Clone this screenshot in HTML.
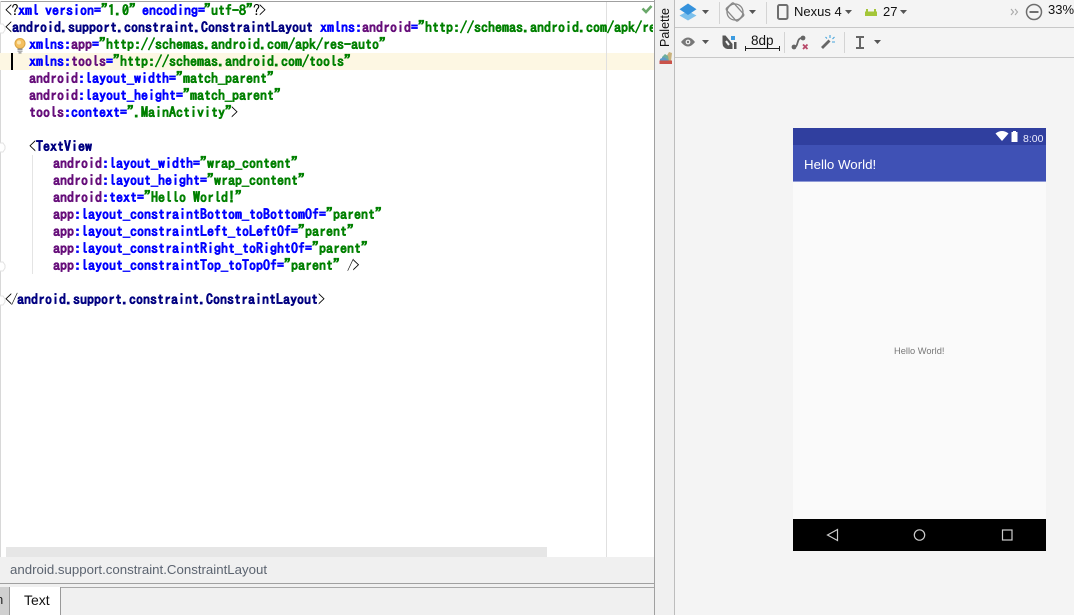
<!DOCTYPE html>
<html><head><meta charset="utf-8">
<style>
html,body{margin:0;padding:0;width:1074px;height:615px;overflow:hidden;background:#fff}
.a{position:absolute}
#code div{position:absolute;white-space:pre;font:bold 14px/17px "IPAGothic","Liberation Mono",monospace;color:#000080;height:17px;font-synthesis:weight;-webkit-text-stroke:.3px}
.p{color:#660e7a}.n{color:#0000ff}.s{color:#008000}.k{color:#000080}.d{color:#000;font-weight:normal;-webkit-text-stroke:0}
svg{position:absolute;overflow:visible}
.ui{position:absolute;font-family:"Liberation Sans",sans-serif;white-space:pre}
</style></head><body>
<div class="a" style="left:0;top:0;width:655px;height:615px;background:#fff"></div>
<div class="a" style="left:0;top:1px;width:655px;height:1px;background:#a0a0a0"></div>
<div class="a" style="left:0;top:1px;width:1px;height:556px;background:#d8d8d8"></div>
<div class="a" style="left:0;top:53px;width:654px;height:17px;background:#fdf7e3"></div>
<div class="a" style="left:606px;top:2px;width:1px;height:555px;background:#e0e0e0"></div>
<div class="a" style="left:32px;top:155px;width:1px;height:119px;background:#e4e4e4"></div>
<div class="a" style="left:11px;top:53px;width:2px;height:17px;background:#000"></div>
<svg style="left:0;top:0" width="14" height="310">
<g fill="#fff" stroke="#e2e2e2"><path d="M0 24h3l2 3v3l-2 3H0"/><path d="M0 143h3l2 3v3l-2 3H0"/><path d="M0 262h3l2 3v3l-2 3H0"/><path d="M0 296h3l2 3v3l-2 3H0"/></g>
</svg>
<svg style="left:14px;top:38px" width="12" height="16">
<circle cx="6" cy="5.500" r="5" fill="#f5c060" stroke="#d9a441"/>
<circle cx="5" cy="4.500" r="2" fill="#fbe3a8"/>
<rect x="3.500" y="10.500" width="5" height="1.400" fill="#888"/><rect x="3.500" y="12.500" width="5" height="1.400" fill="#aaa"/><rect x="4.500" y="14.300" width="3" height="1.200" fill="#888"/>
</svg>
<div id="code">
<div style="left:5px;top:2px"><span class="d" style="letter-spacing:-.5px">&lt;?</span><span class="n">xml</span><span style="margin-left:-1px"> </span><span class="n">version</span><span class="n">=</span><span class="s">"1.0"</span><span style="margin-left:-1px"> </span><span class="n">encoding</span><span class="n" style="margin-right:-1px">=</span><span class="s">"utf-8"</span><span class="d" style="letter-spacing:-1px">?&gt;</span></div>
<div style="left:5px;top:19px;overflow:hidden;width:648px"><span class="d">&lt;</span>android.support.constraint.ConstraintLayout <span class="n">xmlns:</span><span class="p">android</span><span class="n">=</span><span class="s">"http://schemas.android.com/apk/re</span></div>
<div style="left:29px;top:36px"><span class="n">xmlns:</span><span class="p">app</span><span class="n">=</span><span class="s">"http://schemas.android.com/apk/res-auto"</span></div>
<div style="left:29px;top:53px"><span class="n">xmlns:</span><span class="p">tools</span><span class="n">=</span><span class="s">"http://schemas.android.com/tools"</span></div>
<div style="left:29px;top:70px"><span class="p">android</span><span class="n">:layout_width</span><span class="n">=</span><span class="s">"match_parent"</span></div>
<div style="left:29px;top:87px"><span class="p">android</span><span class="n">:layout_height</span><span class="n">=</span><span class="s">"match_parent"</span></div>
<div style="left:29px;top:104px"><span class="p">tools</span><span class="n">:context</span><span class="n">=</span><span class="s">".MainActivity"</span><span class="d" style="margin-left:-1px">&gt;</span></div>
<div style="left:29px;top:138px"><span class="d">&lt;</span>TextView</div>
<div style="left:53px;top:155px"><span class="p">android</span><span class="n">:layout_width</span><span class="n">=</span><span class="s">"wrap_content"</span></div>
<div style="left:53px;top:172px"><span class="p">android</span><span class="n">:layout_height</span><span class="n">=</span><span class="s">"wrap_content"</span></div>
<div style="left:53px;top:189px"><span class="p">android</span><span class="n">:text</span><span class="n">=</span><span class="s">"Hello World!"</span></div>
<div style="left:53px;top:206px"><span class="p">app</span><span class="n">:layout_constraintBottom_toBottomOf</span><span class="n">=</span><span class="s">"parent"</span></div>
<div style="left:53px;top:223px"><span class="p">app</span><span class="n">:layout_constraintLeft_toLeftOf</span><span class="n">=</span><span class="s">"parent"</span></div>
<div style="left:53px;top:240px"><span class="p">app</span><span class="n">:layout_constraintRight_toRightOf</span><span class="n">=</span><span class="s">"parent"</span></div>
<div style="left:53px;top:257px"><span class="p">app</span><span class="n">:layout_constraintTop_toTopOf</span><span class="n">=</span><span class="s">"parent"</span> <span class="d" style="letter-spacing:-1.500px">/&gt;</span></div>
<div style="left:5px;top:291px"><span class="d" style="letter-spacing:-1px">&lt;/</span>android.support.constraint.ConstraintLayout<span class="d">&gt;</span></div>
</div>
<svg style="left:641px;top:4px" width="12" height="10"><path d="M1.500 4.500L5 8L10.500 2" fill="none" stroke="#6aa86a" stroke-width="2.600"/></svg>

<div class="a" style="left:6px;top:547px;width:541px;height:10px;background:#e6e6e6"></div>
<div class="a" style="left:0;top:557px;width:655px;height:26px;background:#f0f0f0"></div>
<div class="ui" style="left:10px;top:562px;font-size:13.250px;line-height:16px;color:#5c6470">android.support.constraint.ConstraintLayout</div>
<div class="a" style="left:0;top:583px;width:655px;height:1px;background:#a0a0a0"></div>
<div class="a" style="left:0;top:584px;width:655px;height:31px;background:#f0f0f0"></div>
<div class="a" style="left:0;top:587px;width:61px;height:28px;background:#fff"></div>
<div class="a" style="left:0;top:587px;width:10px;height:28px;background:#d0d0d0;border-right:1px solid #999;box-sizing:border-box"></div>
<div class="ui" style="left:-4px;top:592px;font-size:13px;line-height:16px;color:#222;width:9px;overflow:visible">n</div>
<div class="a" style="left:60px;top:587px;width:1px;height:28px;background:#999"></div>
<div class="a" style="left:61px;top:587px;width:594px;height:1px;background:#a8a8a8"></div>
<div class="ui" style="left:24px;top:592px;font-size:14px;line-height:16px;color:#111">Text</div>

<!-- palette strip -->
<div class="a" style="left:654px;top:0;width:1px;height:615px;background:#a0a0a0"></div>
<div class="a" style="left:655px;top:0;width:19px;height:615px;background:#f0f0f0"></div>
<div class="a" style="left:674px;top:0;width:1px;height:615px;background:#bdbdbd"></div>
<div class="ui" style="left:659px;top:47px;font-size:12.500px;line-height:12px;color:#111;transform-origin:0 0;transform:rotate(-90deg)">Palette</div>
<svg style="left:659px;top:51px" width="14" height="14">
<path d="M7 6l3-5 3 1-1 8H7z" fill="#c9b27c"/><path d="M3 6l3-3 3 2 1 5H3z" fill="#6fae9c"/><path d="M1 8l4-2 4 3v1H1z" fill="#5a9ac9"/>
<rect x="0.500" y="9.500" width="12.500" height="3.500" fill="#c9524a"/>
</svg>

<!-- right -->
<div class="a" style="left:675px;top:0;width:399px;height:615px;background:#f4f4f4"></div>
<div class="a" style="left:675px;top:27px;width:399px;height:1px;background:#c8c8c8"></div>
<div class="a" style="left:675px;top:57px;width:399px;height:1px;background:#c8c8c8"></div>
<div class="a" style="left:719px;top:2px;width:1px;height:22px;background:#d4d4d4"></div>
<div class="a" style="left:766px;top:2px;width:1px;height:22px;background:#d4d4d4"></div>
<div class="a" style="left:784px;top:32px;width:1px;height:21px;background:#d4d4d4"></div>
<div class="a" style="left:844px;top:32px;width:1px;height:21px;background:#d4d4d4"></div>
<svg style="left:0;top:0" width="1074" height="60">
<!-- layers -->
<path d="M688 11l-8.500 4.500 8.500 5 8.500-5z" fill="#7cc0ec"/><path d="M688 3.500l-8.500 5.700 8.500 5.800 8.500-5.800z" fill="#3592dc"/>
<!-- carets -->
<g fill="#555"><path d="M702 10h7l-3.500 4z"/><path d="M749 10h7l-3.500 4z"/><path d="M845 10h7l-3.500 4z"/><path d="M900 10h7l-3.500 4z"/><path d="M702 40h7l-3.500 4z"/><path d="M874 40h7l-3.500 4z"/></g>
<!-- rotate -->
<g fill="none" stroke="#888" stroke-width="1.300"><circle cx="735" cy="12" r="8"/><rect x="730" y="3.500" width="10" height="17" rx="1.500" transform="rotate(-42 735 12)"/></g>
<!-- device -->
<rect x="778" y="5" width="9.500" height="14" rx="1.500" fill="none" stroke="#6e6e6e" stroke-width="2"/>
<!-- android -->
<path d="M865 11.500h12V16h-12z" fill="#a4c639"/><path d="M866 9h2v2.500h-2zM874 9h2v2.500h-2z" fill="#a4c639"/>
<!-- chevrons -->
<path d="M1011 9l2.500 3-2.500 3M1015 9l2.500 3-2.500 3" fill="none" stroke="#aaa" stroke-width="1.100"/>
<!-- zoom out -->
<circle cx="1034" cy="12" r="7.500" fill="none" stroke="#6e6e6e" stroke-width="1.500"/><rect x="1029.500" y="11" width="9" height="2" fill="#6e6e6e"/>
<!-- eye -->
<path d="M681 42q7-9 14 0q-7 9-14 0z" fill="#777"/><circle cx="688" cy="42" r="2.400" fill="#f4f4f4"/><circle cx="688" cy="42" r="1.200" fill="#777"/>
<!-- magnet -->
<path d="M722.500 35.500l3 0 7 8.500v5h-5q-5-1-5-6z" fill="#555"/><path d="M726 41l3 4" stroke="#f4f4f4" stroke-width="2"/><rect x="731" y="36" width="4" height="4" fill="#3c9be0"/><rect x="734" y="42" width="2.500" height="7" fill="#555"/>
<!-- ruler 8dp -->
<path d="M745.500 46v5M745.500 48.500h34M779.500 46v5" stroke="#222" stroke-width="1" fill="none"/>
<!-- path x -->
<path d="M794 47c5 0 2-9 8-9" fill="none" stroke="#666" stroke-width="1.800"/><circle cx="794" cy="47" r="2.400" fill="#666"/><circle cx="803" cy="38" r="2.400" fill="#666"/><path d="M803 44.500l4.500 4.500M807.500 44.500l-4.500 4.500" stroke="#b84a6a" stroke-width="1.800"/>
<!-- wand -->
<path d="M822 48l7.500-7.500" stroke="#666" stroke-width="2.800"/><path d="M830 35v3M834.500 37l-2 2M835 42h-3M825.500 37l1.500 1.500" stroke="#46a4dc" stroke-width="1.100"/>
<!-- align -->
<path d="M856 37h8M860 37v11M856 48h8" stroke="#666" stroke-width="2" fill="none"/>
</svg>
<div class="ui" style="left:794px;top:4px;font-size:13px;line-height:16px;color:#111">Nexus 4</div>
<div class="ui" style="left:883px;top:4px;font-size:13px;line-height:16px;color:#111">27</div>
<div class="ui" style="left:1048px;top:2px;font-size:13px;line-height:16px;color:#111">33%</div>
<div class="ui" style="left:751px;top:33px;font-size:13.500px;line-height:15px;color:#111">8dp</div>

<!-- phone -->
<div class="a" style="left:793px;top:128px;width:253px;height:423px;background:#fafafa"></div>
<div class="a" style="left:793px;top:128px;width:253px;height:17px;background:#303f9f"></div>
<div class="a" style="left:793px;top:145px;width:253px;height:36px;background:#3f51b5"></div>
<div class="a" style="left:793px;top:181px;width:253px;height:1px;background:#8e99d6"></div>
<svg style="left:995px;top:130px" width="26" height="13">
<path d="M0.500 3.500Q7-1.500 13.500 3.500L7 11z" fill="#fff"/>
<path d="M16 1.500h1.500V.5h3v1H22v10h-6z" fill="#fff" transform="translate(.5 .5)"/>
</svg>
<div class="ui" style="left:1023px;top:133px;font-size:10.500px;line-height:13px;color:#eef">8:00</div>
<div class="ui" style="left:804px;top:157px;font-size:13.300px;line-height:16px;color:#fff">Hello World!</div>
<div class="ui" style="left:894px;top:346px;font-size:9.300px;line-height:11px;color:#777">Hello World!</div>
<div class="a" style="left:793px;top:519px;width:253px;height:32px;background:#000"></div>
<svg style="left:793px;top:519px" width="253" height="32">
<path d="M34.500 16l10-5.500v11z" fill="none" stroke="#ccc" stroke-width="1.200"/>
<circle cx="126.500" cy="16" r="5.200" fill="none" stroke="#ccc" stroke-width="1.200"/>
<rect x="209.500" y="11" width="9.500" height="10" fill="none" stroke="#ccc" stroke-width="1.200"/>
</svg>
</body></html>
